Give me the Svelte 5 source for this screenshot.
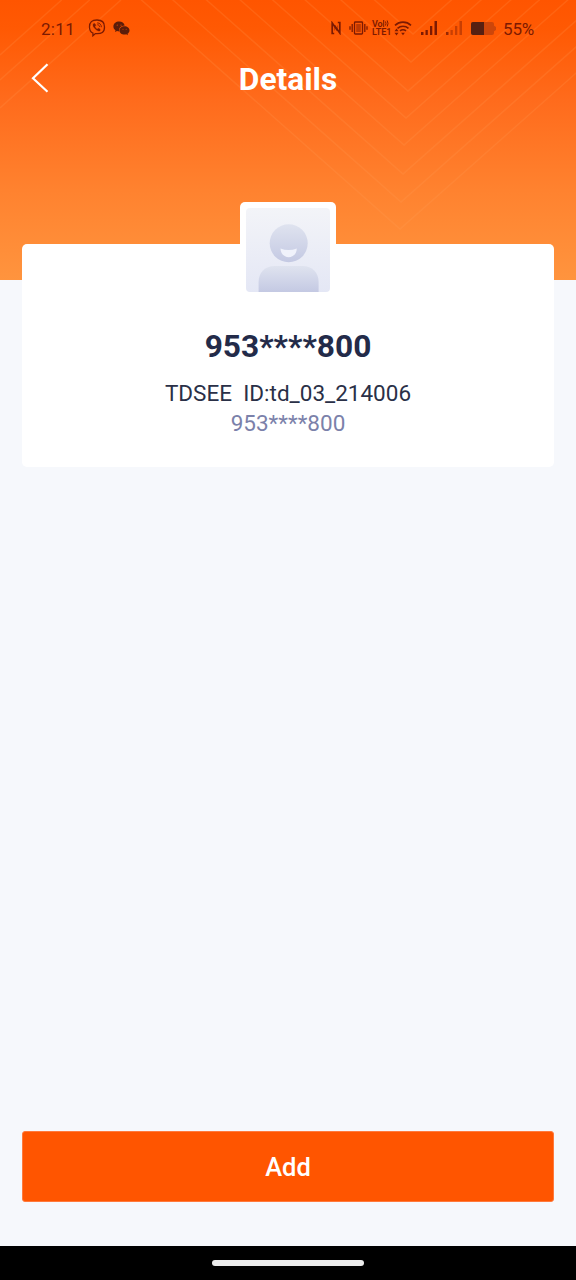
<script lang="ts">
    const contact = {
        name: "953****800",
        account: "TDSEE\u00a0 ID:td_03_214006",
        phone: "953****800",
    };

    const clock = "2:11";
    const battery = 55;

    // tips of the chevrons in the header pattern
    const chevrons = [
        [413, 34],
        [411, 62],
        [408, 91],
        [406, 118],
        [404, 145],
        [403, 174],
        [401, 202],
        [400, 229],
    ];
    const corners = [55, 80, 108];
</script>

<div class="page">
    <svg class="pattern" width="576" height="280" viewBox="0 0 576 280">
        <defs>
            <linearGradient id="fade" gradientUnits="userSpaceOnUse" x1="0" y1="0" x2="0" y2="235">
                <stop offset="0" stop-color="#ff9a52" stop-opacity="0.2" />
                <stop offset="1" stop-color="#ffa25c" stop-opacity="0.18" />
            </linearGradient>
        </defs>
        <g fill="none" stroke="url(#fade)" stroke-width="1.4">
            {#each chevrons as [x, y]}
                <path d="M{x - 280} {y - 248}L{x} {y}l280 -248" />
            {/each}
            {#each corners as y}
                <path d="M0 {y}L{y * 1.12} 0" />
            {/each}
        </g>
    </svg>

    <header>
        <div class="status">
            <span class="clock">{clock}</span>
            <svg class="viber" width="18" height="18" viewBox="0 0 18 18" fill="none" stroke="currentColor">
                <path d="M9 1C4 1 1.500 2.600 1.500 8c0 3.300 1.100 5.200 3.400 6v2.800l2.500-2.200c6.400.4 9.100-1.200 9.100-6.700C16.500 2.600 14 1 9 1z" stroke-width="1.300" />
                <path d="M6 4.400C4.400 5 4.700 7 6.500 9.100c1.900 2.200 4.500 3.800 5.700 2.300l-.2-1.300-1.600-.8-1 .8C8 9.600 7.200 8.500 6.900 7.400l.9-1-.8-1.700z" fill="currentColor" stroke="currentColor" stroke-width=".4" />
                <path d="M9.200 3.900c2.600.1 4.200 1.700 4.200 4.300M9.300 5.700c1.500.1 2.300.9 2.400 2.400" stroke-width=".9" />
            </svg>
            <svg class="wechat" width="17" height="15" viewBox="0 0 17 15">
                <path d="M6.200.6C2.900.6.4 2.700.4 5.500c0 1.600.8 2.900 2.100 3.800L2 11l2-1c.8.300 1.500.4 2.300.400C5.500 7 8 4.600 11.700 4.500 11.100 2.200 8.900.6 6.200.6z" fill="currentColor" />
                <path d="M11.500 5.200c-2.900 0-5 1.900-5 4.200s2.100 4.200 5 4.200c.6 0 1.200-.1 1.700-.3l1.800 1-.5-1.600c1.200-.8 2-1.900 2-3.300 0-2.300-2.200-4.200-5-4.200z" fill="currentColor" />
                <g fill="#c94005">
                    <circle cx="4.300" cy="4.200" r=".65" /><circle cx="8" cy="4.200" r=".65" />
                    <circle cx="10" cy="8.300" r=".55" /><circle cx="13.200" cy="8.300" r=".55" />
                </g>
            </svg>

            <div class="indicators">
                <svg width="10" height="14" viewBox="0 0 10 14" fill="none" stroke="currentColor" stroke-width="1.700">
                    <path d="M3.200 12.500H1.200V2L6.500 9.500M6.800 1.500H8.800v10.500L3.500 4.500" />
                    <path d="M3.500 4.500v5M6.500 9.500v-5" stroke-width=".8" opacity=".5" />
                </svg>
                <svg class="vibrate" width="19" height="14" viewBox="0 0 19 14" fill="none" stroke="currentColor">
                    <rect x="5.500" y="1" width="8" height="12" rx=".8" stroke-width="1.300" />
                    <path d="M7.200 3h4.600v8H7.200z" fill="currentColor" fill-opacity=".5" stroke="none" />
                    <path d="M3.200 3v8M15.800 3v8M1 5.200v3.600M18 5.200v3.600" stroke-width="1.300" />
                </svg>
                <div class="volte">
                    <span>Vo<svg width="6" height="7" viewBox="0 0 6 7" fill="none" stroke="currentColor"><path d="M.7 0v7M2.500 1.500q1 2 0 4M4.200 .5q1.600 3 0 6" /></svg></span>
                    <span>LTE1</span>
                </div>
                <svg class="wifi" width="18" height="15" viewBox="0 0 18 15" fill="none" stroke="currentColor" stroke-width="1.600">
                    <path d="M1 4.300C5.500.1 12.500.1 17 4.300M3.500 7.300c3.200-2.800 7.800-2.800 11 0M6 9.900c1.800-1.400 4.200-1.400 6 0" />
                    <path d="M9 14.200l-1.900-2.400h3.800zM2.500 7.600l2 2.700h-4zM2.500 14.500l-2-2.700h4z" fill="currentColor" stroke="none" />
                </svg>
                <svg class="signal" width="16" height="14" viewBox="0 0 16 14" fill="currentColor">
                    <path d="M0 11h2.500v3H0zM4.500 9h2.300v5H4.500zM9 5h2.300v9H9zM13.500 0H16v14h-2.500z" />
                </svg>
                <svg class="signal second" width="16" height="14" viewBox="0 0 16 14" fill="currentColor">
                    <path d="M0 11h2.500v3H0z" opacity=".8" />
                    <path d="M4.500 9h2.300v5H4.500zM9 5h2.300v9H9zM13.500 0H16v14h-2.500z" opacity=".42" />
                </svg>
                <svg class="battery" width="25" height="13" viewBox="0 0 25 13">
                    <path d="M2 0h19q2 0 2 2v1.800l2 1.200v3l-2 1.200V11q0 2-2 2H2q-2 0-2-2V2q0-2 2-2z" fill="#c4430c" fill-opacity=".85" />
                    <path d="M2 0h11v13H2q-2 0-2-2V2q0-2 2-2z" fill="#562012" />
                </svg>
                <span class="percent">{battery}%</span>
            </div>
        </div>

        <div class="titlebar">
            <button class="back" aria-label="Back">
                <svg width="18" height="30" viewBox="0 0 18 30" fill="none" stroke="#fff" stroke-width="2.200">
                    <path d="M16.500 1.200L2 15.200l14.500 13.600" />
                </svg>
            </button>
            <h1>Details</h1>
        </div>
    </header>

    <section class="card">
        <div class="avatar">
            <svg width="84" height="84" viewBox="0 0 84 84">
                <defs>
                    <linearGradient id="bg" x1="0" y1="0" x2="0" y2="1">
                        <stop offset="0" stop-color="#f3f4f8" />
                        <stop offset="1" stop-color="#e4e7f5" />
                    </linearGradient>
                    <linearGradient id="head" x1="0" y1="0" x2="0" y2="1">
                        <stop offset="0" stop-color="#dfe3ef" />
                        <stop offset="1" stop-color="#c4c9e3" />
                    </linearGradient>
                </defs>
                <rect width="84" height="84" rx="4" fill="url(#bg)" />
                <circle cx="42.700" cy="35.300" r="19" fill="url(#head)" />
                <path d="M34.500 40.500q8.150 3 16.300 0c0 5-3.600 8.700-8.100 8.700s-8.200-3.700-8.200-8.700z" fill="#f0f2fb" />
                <path d="M12.600 84V74c0-9.500 6.500-16 16-16h28c9.500 0 16 6.500 16 16v10z" fill="url(#head)" />
            </svg>
        </div>
        <h2>{contact.name}</h2>
        <p class="account">{contact.account}</p>
        <p class="phone">{contact.phone}</p>
    </section>

    <button class="add">Add</button>

    <div class="navbar"><span></span></div>
</div>

<style>
    :global(body) {
        margin: 0;
    }

    .page {
        position: relative;
        display: flex;
        flex-direction: column;
        height: 1280px;
        background: #f6f8fc linear-gradient(#ff5500 0, #ff5903 28px, #ff6b1c 100px, #ff822f 190px, #ff943e 280px) no-repeat 0 0 / 100% 280px;
        font-family: Roboto, "Liberation Sans", sans-serif;
        overflow: hidden;
    }

    .pattern {
        position: absolute;
        top: 0;
        left: 0;
    }

    header {
        position: relative;
        height: 244px;
    }

    .status {
        display: flex;
        align-items: center;
        height: 56px;
        padding: 0 42px 0 41px;
        box-sizing: border-box;
        color: #7c1a02;
        font-size: 17px;
    }

    .clock {
        width: 47px;
        padding-top: 1px;
        letter-spacing: 0.3px;
    }

    .wechat {
        margin-left: 7px;
        color: #5c1d0a;
    }

    .indicators {
        display: flex;
        align-items: center;
        margin-left: auto;
    }

    .vibrate {
        margin-left: 8px;
    }

    .volte {
        display: flex;
        flex-direction: column;
        width: 19px;
        margin-left: 4px;
        font-size: 9px;
        font-weight: 600;
        line-height: 8px;
        letter-spacing: -0.1px;
    }

    .volte span {
        height: 8px;
        white-space: nowrap;
    }

    .wifi {
        margin-left: 3px;
    }

    .signal {
        margin-left: 9px;
    }

    .battery {
        margin-left: 9px;
    }

    .percent {
        margin-left: 7px;
        padding-top: 1px;
        font-size: 17px;
        letter-spacing: -0.2px;
    }

    .titlebar {
        display: grid;
        grid-template-columns: 80px 1fr 80px;
        align-items: center;
        height: 46px;
    }

    .back {
        display: flex;
        margin: 0;
        padding: 0 0 3px 31px;
        border: none;
        background: none;
    }

    h1 {
        margin: 0;
        padding-top: 2px;
        color: #fff;
        font-size: 31.7px;
        font-weight: 700;
        line-height: 44px;
        text-align: center;
    }

    .card {
        position: relative;
        display: flex;
        flex-direction: column;
        align-items: center;
        height: 223px;
        margin: 0 22px;
        border-radius: 5px;
        background: #fff;
    }

    .avatar {
        width: 84px;
        height: 84px;
        margin: -42px 0 0 0;
        padding: 6px;
        border-radius: 5px;
        background: #fff;
    }

    h2 {
        margin: 29px 0 0;
        color: #232b49;
        font-size: 31.7px;
        font-weight: 700;
        line-height: 40px;
    }

    p {
        margin: 0;
        font-size: 22.5px;
        line-height: 30px;
    }

    .account {
        margin-top: 11px;
        color: #2a3047;
    }

    .phone {
        color: #7b81aa;
    }

    .add {
        height: 71px;
        margin: auto 22px 44px;
        padding: 0;
        border: 1px solid #ff7a3d;
        border-radius: 3px;
        background: #ff5500;
        color: #fff;
        font-family: inherit;
        font-size: 25.5px;
        font-weight: 500;
    }

    .navbar {
        display: flex;
        align-items: center;
        justify-content: center;
        height: 34px;
        background: #000;
    }

    .navbar span {
        width: 152px;
        height: 6px;
        border-radius: 3px;
        background: #ececec;
    }
</style>
